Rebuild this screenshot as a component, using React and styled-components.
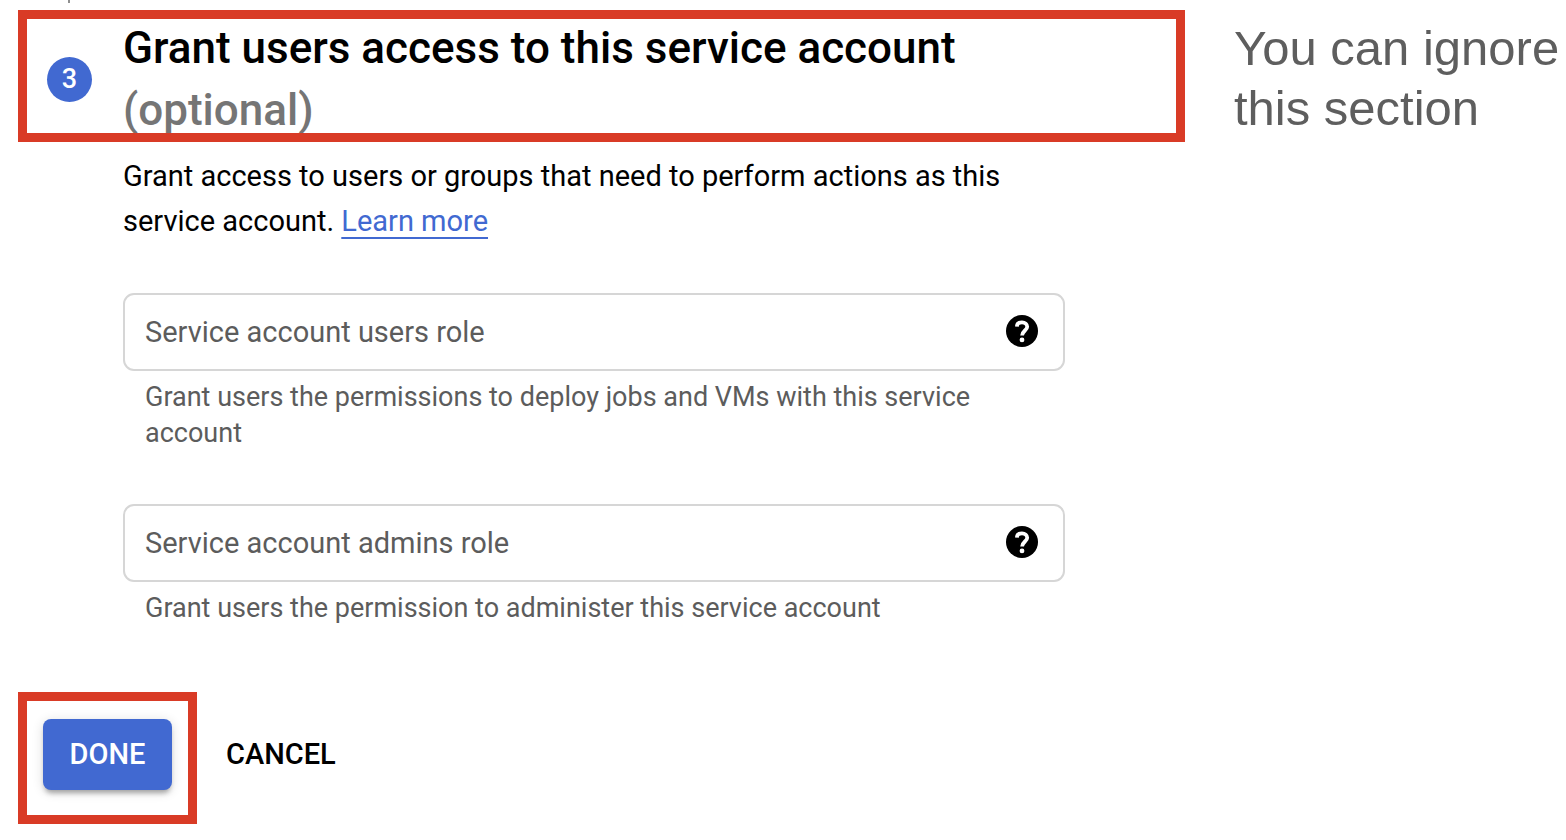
import React, { useId } from "react";
import styled, { createGlobalStyle, css } from "styled-components";

const GlobalStyle = createGlobalStyle`
  *, *::before, *::after { box-sizing: border-box; }
  body {
    margin: 0;
    background: #fff;
    color: #000;
    font-family: Roboto, "Liberation Sans", sans-serif;
    font-size: 29px;
  }
  h2, p { margin: 0; }
`;

const Page = styled.div`
  display: flex;
  align-items: flex-start;
  gap: 49px;
  padding: 0 0 16px 18px;
`;

const Step = styled.main`
  flex: 1;
  min-width: 0;
`;

const Connector = styled.div`
  width: 2px;
  height: 3px;
  margin: 0 0 7px 50px;
  background: #8f8f8f;
`;

const highlight = css`
  border: 9px solid #d93b26;
`;

const StepFrame = styled.header`
  ${highlight}
  height: 132px;
  overflow: hidden;
`;

const StepTitle = styled.div`
  display: flex;
  align-items: center;
  gap: 31px;
  margin-top: -2px;
  padding: 0 111px 0 20px;
`;

const StepNumber = styled.span`
  flex: none;
  width: 45px;
  height: 45px;
  border-radius: 50%;
  background: #4169d1;
  color: #fff;
  font-size: 27px;
  font-weight: 500;
  line-height: 44px;
  text-align: center;
`;

const Heading = styled.h2`
  font-size: 44px;
  font-weight: 500;
  line-height: 62px;
`;

const Optional = styled.span`
  color: #757575;
`;

const StepBody = styled.div`
  padding: 12px 120px 0 105px;
`;

const Intro = styled.p`
  line-height: 45px;
`;

const Link = styled.a`
  color: #4169d1;
  text-decoration: underline;
  text-decoration-thickness: 2px;
  text-underline-offset: 6px;
  text-decoration-skip-ink: none;
`;

const Fields = styled.div`
  display: flex;
  flex-direction: column;
  gap: 53px;
  padding-top: 49px;
`;

const FieldBox = styled.div`
  display: flex;
  align-items: center;
  height: 78px;
  padding: 0 25px 0 20px;
  border: 2px solid #d6d6d6;
  border-radius: 11px;
`;

const FieldInput = styled.input`
  flex: 1;
  min-width: 0;
  padding: 0;
  border: 0;
  outline: 0;
  background: none;
  color: #000;
  font: inherit;
  &::placeholder { color: #5c5c5c; opacity: 1; }
`;

const HelpButton = styled.button`
  display: flex;
  padding: 0 0 2px;
  border: 0;
  background: none;
  color: #000;
  cursor: pointer;
`;

const Hint = styled.p`
  padding: 8px 22px 0;
  color: #5c5c5c;
  font-size: 27px;
  line-height: 36px;
`;

const Actions = styled.div`
  display: flex;
  align-items: baseline;
  gap: 29px;
  padding-top: 66px;
`;

const ActionFrame = styled.div`
  ${highlight}
  padding: 18px 16px 25px;
`;

const Button = styled.button`
  border: 0;
  background: none;
  color: #000;
  font-family: inherit;
  font-size: 29px;
  font-weight: 500;
  line-height: 71px;
  padding: 0;
  cursor: pointer;
  ${(p) => p.$primary && css`
    min-width: 129px;
    border-radius: 8px;
    background: #4169d1;
    color: #fff;
    box-shadow: 0 5px 5px -2px rgba(0, 0, 0, 0.3), 0 2px 12px rgba(0, 0, 0, 0.14);
  `}
`;

const Note = styled.aside`
  flex: none;
  width: 332px;
  padding-top: 18px;
  color: #5e5e5e;
  font-family: "Liberation Sans", Arial, sans-serif;
  font-size: 49px;
  line-height: 60px;
`;

function HelpIcon() {
  return (
    <svg width="32" height="32" viewBox="0 0 32 32" aria-hidden="true">
      <circle cx="16" cy="16" r="16" fill="currentColor" />
      <path
        d="M10.9 11.6C11 8.9 13 7.4 16 7.4C19.1 7.4 21.2 9.2 21.2 11.8C21.2 15.4 16.1 15.7 16.1 20.6"
        fill="none"
        stroke="#fff"
        strokeWidth="3.8"
      />
      <circle cx="16" cy="24.9" r="2.4" fill="#fff" />
    </svg>
  );
}

function RoleField({ label, hint }) {
  const id = useId();
  return (
    <div>
      <FieldBox>
        <FieldInput aria-label={label} placeholder={label} aria-describedby={id} />
        <HelpButton type="button" aria-label={`Help: ${label}`}>
          <HelpIcon />
        </HelpButton>
      </FieldBox>
      <Hint id={id}>{hint}</Hint>
    </div>
  );
}

export default function App() {
  return (
    <>
      <GlobalStyle />
      <Page>
        <Step>
          <Connector />
          <StepFrame>
            <StepTitle>
              <StepNumber>3</StepNumber>
              <Heading>
                Grant users access to this service account <Optional>(optional)</Optional>
              </Heading>
            </StepTitle>
          </StepFrame>
          <StepBody>
            <Intro>
              Grant access to users or groups that need to perform actions as this service account.{" "}
              <Link href="#learn-more">Learn more</Link>
            </Intro>
            <Fields>
              <RoleField
                label="Service account users role"
                hint="Grant users the permissions to deploy jobs and VMs with this service account"
              />
              <RoleField
                label="Service account admins role"
                hint="Grant users the permission to administer this service account"
              />
            </Fields>
          </StepBody>
          <Actions>
            <ActionFrame>
              <Button type="button" $primary>DONE</Button>
            </ActionFrame>
            <Button type="button">CANCEL</Button>
          </Actions>
        </Step>
        <Note>You can ignore this section</Note>
      </Page>
    </>
  );
}
